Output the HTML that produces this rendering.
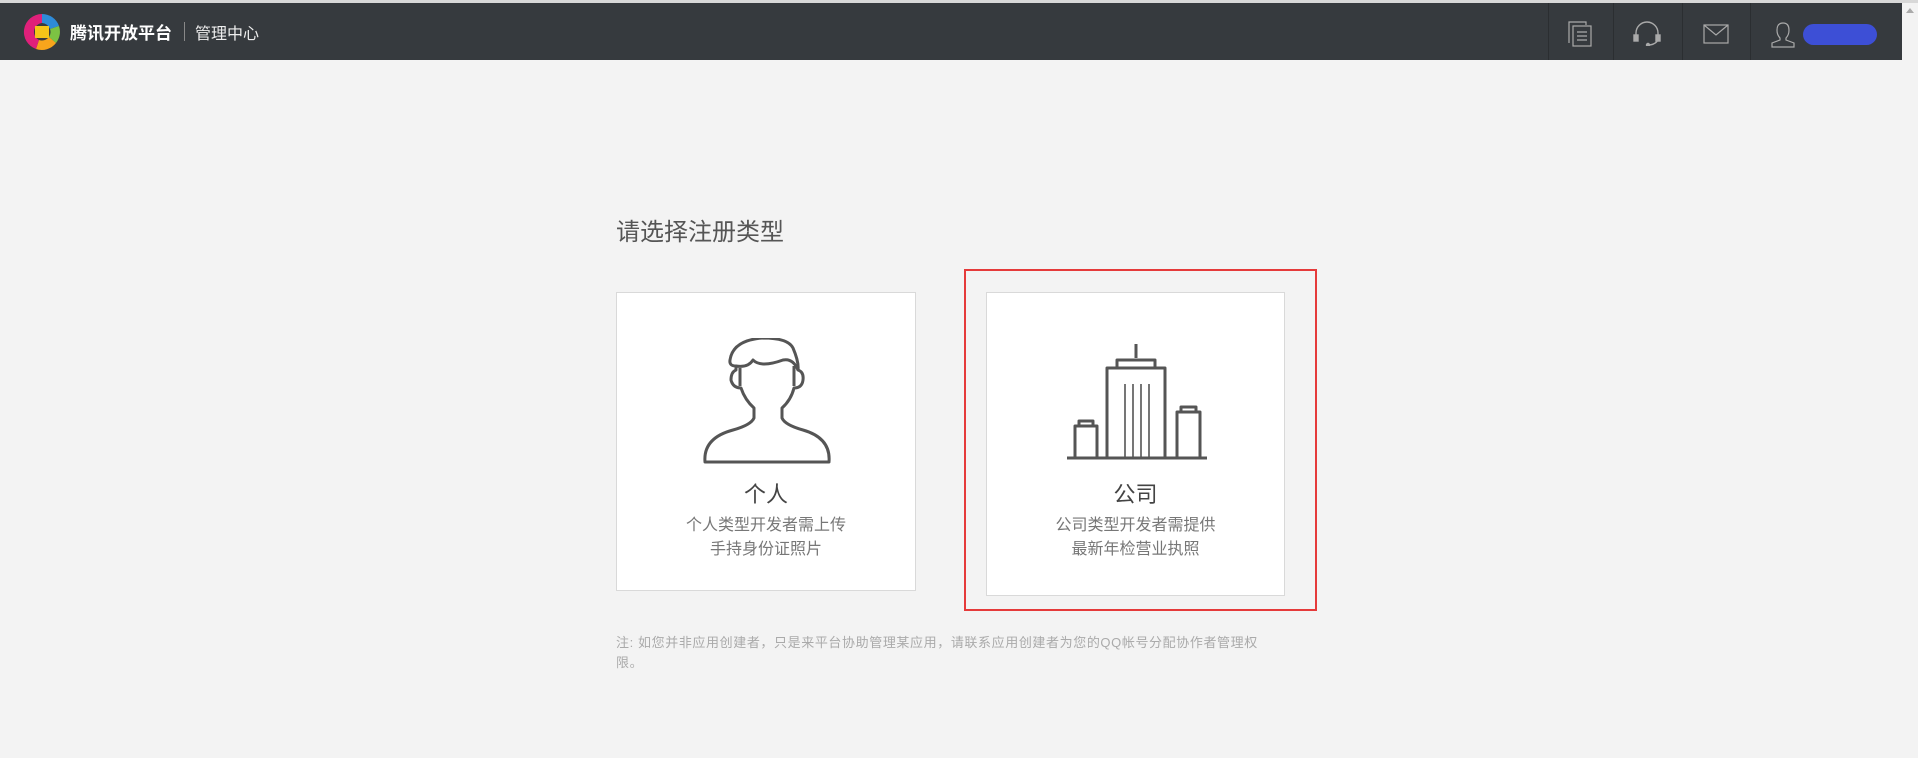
<!DOCTYPE html>
<html><head><meta charset="utf-8"><style>
body{margin:0;width:1918px;height:758px;background:#f3f3f3;font-family:"Liberation Sans","Noto Sans CJK SC",sans-serif;position:relative;overflow:hidden}
.a{position:absolute}
#top{left:0;top:0;width:1918px;height:3px;background:#d8d8d8}
#hdr{left:0;top:3px;width:1902px;height:57px;background:#363a3e}
.dv{top:3px;width:1px;height:57px;background:#2b2e31}
.card{background:#fff;border:1px solid #d9d9d9;box-sizing:border-box}
.t{color:#444;font-size:22px;text-align:center;width:100%}
.d{color:#777;font-size:16px;line-height:24px;text-align:center;width:100%}
</style></head><body>
<div class="a" id="top"></div>
<div class="a" id="hdr"></div>
<svg class="a" style="left:22px;top:12px" width="40" height="40" viewBox="0 0 40 40">
<path d="M20 2 A18 18 0 0 1 37 14 L28 17 A9 9 0 0 0 20 11Z" fill="#2e8bd8"/>
<path d="M37 14 A18 18 0 0 1 34 31 L27 25 A9 9 0 0 0 28 17Z" fill="#7cc243"/>
<path d="M34 31 A18 18 0 0 1 14 37 L17 28 A9 9 0 0 0 27 25Z" fill="#f7a51c"/>
<path d="M14 37 A18 18 0 0 1 20 2 L20 11 A9 9 0 0 0 17 28Z" fill="#e0207a"/>
<rect x="13" y="14" width="14" height="12" fill="#f5c518"/>
</svg>
<div class="a" style="left:70px;top:19px;color:#fff;font-size:17px;font-weight:bold">腾讯开放平台</div>
<div class="a" style="left:184px;top:22px;width:1px;height:19px;background:#888"></div>
<div class="a" style="left:195px;top:20px;color:#eee;font-size:16px">管理中心</div>
<div class="a dv" style="left:1548px"></div>
<div class="a dv" style="left:1613px"></div>
<div class="a dv" style="left:1682px"></div>
<div class="a dv" style="left:1750px"></div>
<svg class="a" style="left:1566px;top:19px" width="28" height="28" viewBox="0 0 28 28" fill="none" stroke="#aaa" stroke-width="1.2"><path d="M3 24V3h17v3"/><rect x="7" y="7" width="18" height="20"/><path d="M11 13h10M11 17h10M11 21h10"/></svg>
<svg class="a" style="left:1632px;top:20px" width="30" height="26" viewBox="0 0 30 26" fill="none" stroke="#aaa" stroke-width="1.4"><path d="M4 18V13A11 11 0 0 1 26 13V18"/><rect x="2" y="15" width="4" height="6" fill="#aaa"/><rect x="24" y="15" width="4" height="6" fill="#aaa"/><path d="M26 20q-3 5-10 5"/><circle cx="16" cy="25" r="1.5" fill="#aaa"/></svg>
<svg class="a" style="left:1703px;top:24px" width="26" height="20" viewBox="0 0 26 20" fill="none" stroke="#aaa" stroke-width="1.2"><rect x="1" y="1" width="24" height="18"/><path d="M1 1l12 10 12-10"/></svg>
<svg class="a" style="left:1770px;top:22px" width="26" height="26" viewBox="0 0 26 26" fill="none" stroke="#aaa" stroke-width="1.2"><path d="M13 1c-5 0-6 4-6 7s1 6 3 8v2l-8 3v4h22v-4l-8-3v-2c2-2 3-5 3-8s-1-7-6-7z"/></svg>
<div class="a" style="left:1803px;top:24px;width:74px;height:21px;border-radius:11px;background:#3d4fd6"></div>
<div class="a" style="left:1906px;top:8px;width:0;height:0;border-left:4px solid transparent;border-right:4px solid transparent;border-bottom:5px solid #aaa"></div>

<div class="a" style="left:616px;top:212px;font-size:24px;color:#555">请选择注册类型</div>

<div class="a card" style="left:616px;top:292px;width:300px;height:299px">
<svg class="a" style="left:86px;top:45px" width="130" height="128" viewBox="0 0 130 128" fill="none" stroke="#555" stroke-width="3" stroke-linejoin="round">
<path d="M2 124Q0 100 30 92Q48 87 51 80L51 70Q42 62 38 50Q30 50 28 42Q28 34 33 32L33 28Q26 28 27 22Q30 2 60 0Q85 0 90 10Q96 24 95 32Q101 34 100 42Q99 50 91 50Q88 62 79 70L79 80Q82 87 100 92Q128 100 126 124Z"/>
<path d="M33 28Q45 30 50 22Q58 30 80 22Q90 20 95 32"/>
<path d="M37 30V48M91 28V48"/>
</svg>
<div class="a t" style="top:184px">个人</div>
<div class="a d" style="top:221px">个人类型开发者需上传<br>手持身份证照片</div>
</div>

<div class="a" style="left:964px;top:269px;width:353px;height:342px;border:2.5px solid #e53a3a;box-sizing:border-box"></div>
<div class="a card" style="left:986px;top:292px;width:299px;height:304px">
<svg class="a" style="left:80px;top:51px" width="140" height="116" viewBox="0 0 140 116" fill="none" stroke="#555" stroke-width="3" stroke-linejoin="round">
<path d="M69 0V14M50 24V16H88V24"/>
<path d="M40 114V24H98V114"/>
<path d="M58 40V114M66 40V114M74 40V114M82 40V114" stroke-width="1.6"/>
<path d="M8 114V82H30V114M12 82V77H26V82"/>
<path d="M110 114V68H133V114M114 68V63H129V68"/>
<path d="M0 114H140"/>
</svg>
<div class="a t" style="top:184px">公司</div>
<div class="a d" style="top:221px">公司类型开发者需提供<br>最新年检营业执照</div>
</div>

<div class="a" style="left:616px;top:633px;width:665px;font-size:13px;letter-spacing:0.6px;line-height:20px;color:#aaa">注: 如您并非应用创建者，只是来平台协助管理某应用，请联系应用创建者为您的QQ帐号分配协作者管理权限。</div>
</body></html>
